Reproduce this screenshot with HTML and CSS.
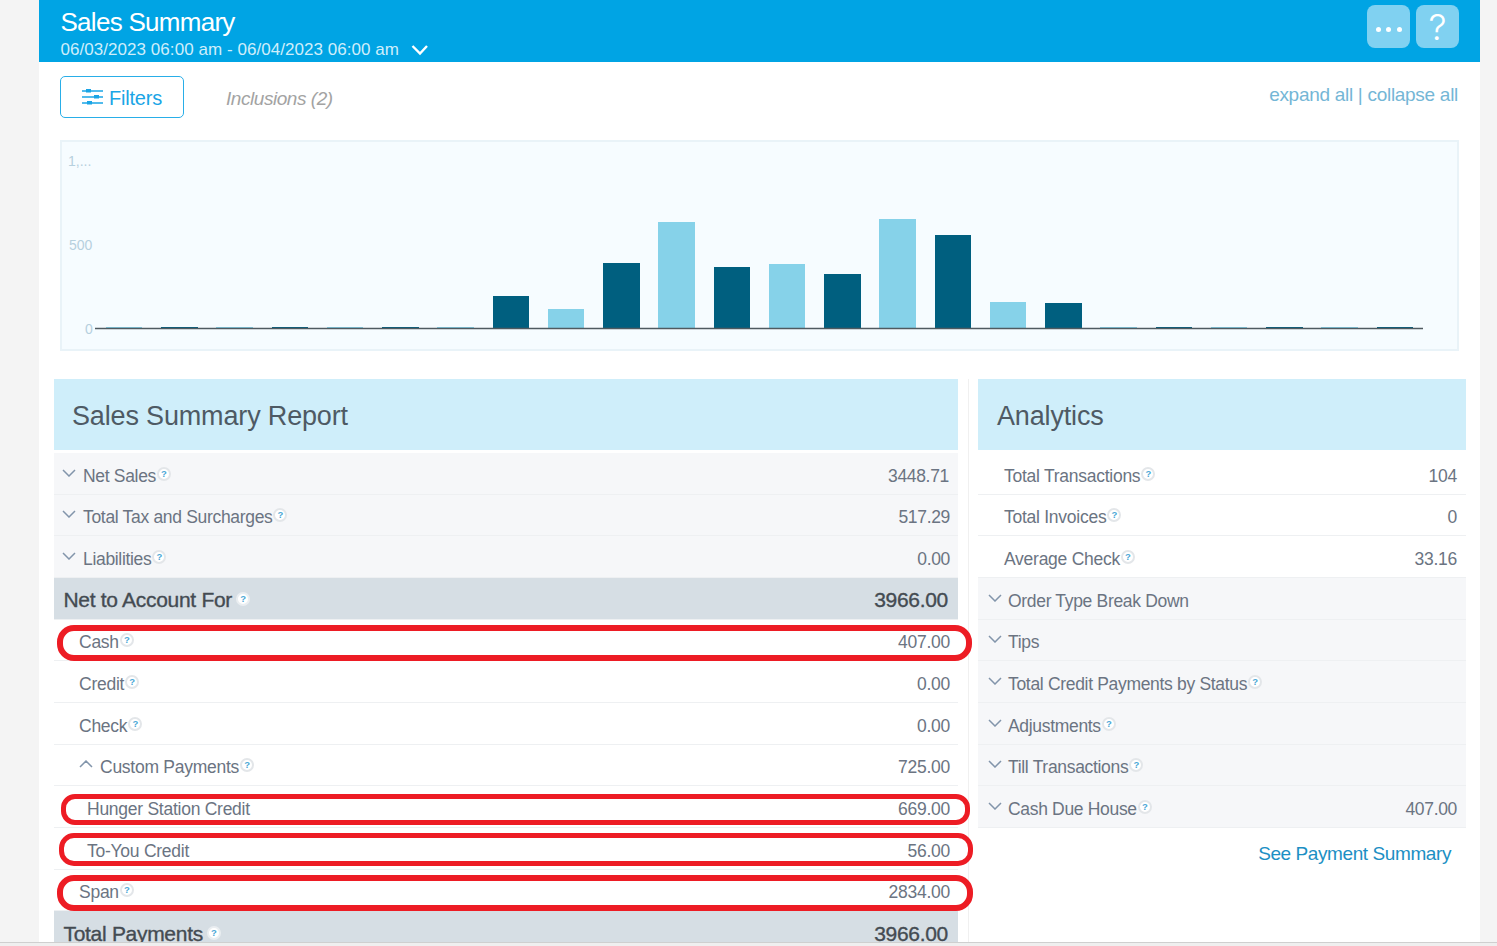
FILE: index.html
```html
<!DOCTYPE html>
<html lang="en">
<head>
<meta charset="utf-8">
<title>Sales Summary</title>
<link rel="stylesheet" href="styles.css">
</head>
<body>
<svg class="defs" width="0" height="0" aria-hidden="true">
  <symbol id="chev" viewBox="0 0 14 8"><path d="M1 1l6 6 6-6" fill="none" stroke="#8295ab" stroke-width="1.5"/></symbol>
  <symbol id="chevup" viewBox="0 0 14 8"><path d="M1 7l6-6 6 6" fill="none" stroke="#8295ab" stroke-width="1.5"/></symbol>
</svg>
<div class="app">
  <header class="top">
    <div class="top-text">
      <div class="title">Sales Summary</div>
      <div class="dates">06/03/2023 06:00 am - 06/04/2023 06:00 am
        <svg class="date-chev" viewBox="0 0 18 12" width="18" height="12"><path d="M1.5 2l7.500 7.500L16 2" fill="none" stroke="#fff" stroke-width="2.400"/></svg>
      </div>
    </div>
    <div class="top-btns">
      <div class="tbtn tbtn-dots"><span class="dot"></span><span class="dot"></span><span class="dot"></span></div>
      <div class="tbtn tbtn-q">?</div>
    </div>
  </header>
  <div class="toolbar">
    <div class="filters">
      <svg viewBox="0 0 21 20" width="21" height="20"><g stroke="#1aa5e6" stroke-width="1.600" fill="#1aa5e6"><path d="M0 4h21M0 10h21M0 16h21"/><rect x="4" y="2" width="5" height="3.500" stroke="none"/><rect x="12" y="8" width="5" height="3.500" stroke="none"/><rect x="5" y="14" width="5" height="3.500" stroke="none"/></g></svg>
      <span class="filters-text">Filters</span>
    </div>
    <div class="inclusions">Inclusions (2)</div>
    <div class="expand">expand all | collapse all</div>
  </div>
  <div class="chart">
    <svg viewBox="1 1 1395 207" width="1395" height="207">
      <g class="axis"><text x="7" y="25">1,...</text><text x="8" y="109">500</text><text x="24" y="193">0</text></g>
      <g class="light">
        <rect x="45" y="186" width="36" height="2"/><rect x="155" y="186" width="37" height="2"/><rect x="266" y="186" width="36" height="2"/><rect x="376" y="186" width="37" height="2"/>
        <rect x="487" y="168" width="36" height="20"/><rect x="597" y="81" width="37" height="107"/><rect x="708" y="123" width="36" height="65"/><rect x="818" y="78" width="37" height="110"/><rect x="929" y="161" width="36" height="27"/>
        <rect x="1039" y="186" width="37" height="2"/><rect x="1150" y="186" width="36" height="2"/><rect x="1260" y="186" width="37" height="2"/>
      </g>
      <g class="dark">
        <rect x="100" y="186" width="37" height="2"/><rect x="211" y="186" width="36" height="2"/><rect x="321" y="186" width="37" height="2"/>
        <rect x="432" y="155" width="36" height="33"/><rect x="542" y="122" width="37" height="66"/><rect x="653" y="126" width="36" height="62"/><rect x="763" y="133" width="37" height="55"/><rect x="874" y="94" width="36" height="94"/><rect x="984" y="162" width="37" height="26"/>
        <rect x="1095" y="186" width="36" height="2"/><rect x="1205" y="186" width="37" height="2"/><rect x="1316" y="186" width="36" height="2"/>
      </g>
      <path class="base" d="M34 187.500H1362"/>
    </svg>
  </div>
  <div class="cols">
    <section class="col-left">
      <h2 class="panel-head">Sales Summary Report</h2>
      <div class="rows">
        <div class="row gray"><svg class="chev"><use href="#chev"/></svg><span class="label">Net Sales<i class="help">?</i></span><span class="val nudge">3448.71</span></div>
        <div class="row gray"><svg class="chev"><use href="#chev"/></svg><span class="label">Total Tax and Surcharges<i class="help">?</i></span><span class="val">517.29</span></div>
        <div class="row gray"><svg class="chev"><use href="#chev"/></svg><span class="label">Liabilities<i class="help">?</i></span><span class="val">0.00</span></div>
        <div class="row total"><span class="label">Net to Account For<i class="help">?</i></span><span class="val">3966.00</span></div>
        <div class="row ind"><span class="label">Cash<i class="help">?</i></span><span class="val">407.00</span></div>
        <div class="row ind"><span class="label">Credit<i class="help">?</i></span><span class="val">0.00</span></div>
        <div class="row ind"><span class="label">Check<i class="help">?</i></span><span class="val">0.00</span></div>
        <div class="row ind-chev"><svg class="chev"><use href="#chevup"/></svg><span class="label">Custom Payments<i class="help">?</i></span><span class="val">725.00</span></div>
        <div class="row sub"><span class="label">Hunger Station Credit</span><span class="val">669.00</span></div>
        <div class="row sub"><span class="label">To-You Credit</span><span class="val">56.00</span></div>
        <div class="row ind"><span class="label">Span<i class="help">?</i></span><span class="val">2834.00</span></div>
        <div class="row total"><span class="label">Total Payments<i class="help">?</i></span><span class="val">3966.00</span></div>
      </div>
    </section>
    <section class="col-right">
      <h2 class="panel-head">Analytics</h2>
      <div class="rows">
        <div class="row plain"><span class="label">Total Transactions<i class="help">?</i></span><span class="val">104</span></div>
        <div class="row plain"><span class="label">Total Invoices<i class="help">?</i></span><span class="val">0</span></div>
        <div class="row plain"><span class="label">Average Check<i class="help">?</i></span><span class="val">33.16</span></div>
        <div class="row gray"><svg class="chev"><use href="#chev"/></svg><span class="label">Order Type Break Down</span></div>
        <div class="row gray"><svg class="chev"><use href="#chev"/></svg><span class="label">Tips</span></div>
        <div class="row gray"><svg class="chev"><use href="#chev"/></svg><span class="label">Total Credit Payments by Status<i class="help">?</i></span></div>
        <div class="row gray"><svg class="chev"><use href="#chev"/></svg><span class="label">Adjustments<i class="help">?</i></span></div>
        <div class="row gray"><svg class="chev"><use href="#chev"/></svg><span class="label">Till Transactions<i class="help">?</i></span></div>
        <div class="row gray"><svg class="chev"><use href="#chev"/></svg><span class="label">Cash Due House<i class="help">?</i></span><span class="val">407.00</span></div>
      </div>
      <div class="see">See Payment Summary</div>
    </section>
  </div>
</div>
<div class="oval oval-cash"></div>
<div class="oval oval-hunger"></div>
<div class="oval oval-toyou"></div>
<div class="oval oval-span"></div>
<div class="bottom-strip"></div>
</body>
</html>
```
FILE: styles.css
```css
* { box-sizing: border-box; }
html, body { margin: 0; height: 946px; overflow: hidden; }
body { background: #f4f4f4; font-family: "Liberation Sans", Arial, sans-serif; color: #6b7482; position: relative; }
.defs { position: absolute; }
.app { margin-left: 39px; width: 1441px; height: 946px; background: #fff; overflow: hidden; }

.top { height: 62px; background: #00a4e4; display: flex; justify-content: space-between; padding: 5px 21px 0 21.500px; color: #fff; }
.title { font-size: 26px; line-height: 30px; letter-spacing: -0.72px; margin-top: 2px; }
.dates { font-size: 17px; line-height: 20px; letter-spacing: 0.05px; margin-top: 3px; color: #cfeefb; display: flex; align-items: center; gap: 12px; }
.date-chev { flex: none; }
.top-btns { display: flex; gap: 6px; }
.tbtn { width: 43px; height: 43px; border-radius: 8px; background: #80d1f1; display: flex; align-items: center; justify-content: center; }
.tbtn-dots { gap: 5.500px; padding-top: 6px; }
.tbtn-q { font-family: Inter, "Liberation Sans", sans-serif; font-size: 36px; font-weight: 300; color: #fff; }
.dot { width: 5px; height: 5px; border-radius: 50%; background: #fff; }

.toolbar { display: flex; padding: 14px 22px 0 21px; height: 78px; align-items: flex-start; }
.filters { width: 124px; height: 42px; border: 1px solid #29aee8; border-radius: 5px; display: flex; align-items: center; justify-content: center; gap: 6px; color: #1aa5e6; font-size: 20px; letter-spacing: -0.18px; }
.filters-text { position: relative; top: 1px; }
.inclusions { margin-left: 42px; margin-top: 12px; font-style: italic; font-size: 19px; letter-spacing: -0.45px; color: #a3a3a3; }
.expand { margin-left: auto; margin-top: 8px; font-size: 19px; letter-spacing: -0.29px; color: #74b6d6; }

.chart { margin-left: 21px; width: 1399px; height: 211px; border: 2px solid #e9f3f8; background: #f6fcff; }
.chart svg { display: block; }
.axis text { font-family: "Liberation Sans", Arial, sans-serif; font-size: 14px; fill: #b6d0de; }
.light rect { fill: #86d2e9; }
.dark rect { fill: #005f7f; }
.base { stroke: #4f5a60; stroke-width: 1.500; fill: none; }

.cols { display: flex; margin-top: 28px; padding-left: 15px; }
.col-left { width: 904px; flex: none; }
.col-right { width: 498px; flex: none; margin-left: 10px; padding-left: 10px; border-left: 1px solid #f0f0f0; }
.col-right .panel-head { margin-left: -1px; padding-left: 19px; }
.panel-head { margin: 0; height: 71px; background: #cfeefa; padding: 0 18px; font-size: 27px; font-weight: 400; line-height: 75px; color: #4e5a64; letter-spacing: -0.16px; }
.rows { margin-top: 3px; }
.row { height: 41.670px; border-bottom: 1px solid #eef0f2; display: flex; align-items: center; padding-right: 8px; font-size: 17.500px; letter-spacing: -0.26px; }
.col-right .row { margin-left: -1px; padding-right: 9px; }
.label { position: relative; top: 3px; white-space: nowrap; }
.val { margin-left: auto; position: relative; top: 3px; }
.nudge { left: -1px; }
.gray { background: #f6f7f9; letter-spacing: -0.32px; }
.chev { width: 14px; height: 8px; flex: none; margin: -1px 7px 0 8px; }
.col-right .chev { margin-left: 10px; margin-right: 6px; }
.total { background: #d6dee4; color: #444b52; padding-left: 9.500px; font-size: 21px; -webkit-text-stroke: 0.35px #444b52; letter-spacing: -0.3px; padding-right: 10px; }
.total .label, .total .val { top: 2px; }
.total .help { border-color: #eaeef1; margin-left: 4px; }
.ind { padding-left: 25px; }
.ind-chev { padding-left: 25px; }
.ind-chev .chev { margin: -2px 7px 0 0; }
.sub { padding-left: 33px; }
.plain { padding-left: 26px; }
.help { display: inline-block; width: 14px; height: 14px; border-radius: 50%; border: 2px solid #e3e6e9; background: #fff; color: #4ba7d6; font-size: 9.500px; font-weight: 700; font-style: normal; line-height: 10px; text-align: center; vertical-align: 5px; margin-left: 1px; letter-spacing: 0; -webkit-text-stroke: 0; }
.see { text-align: right; margin-top: 15px; padding-right: 15px; font-size: 19px; letter-spacing: -0.41px; color: #1c8fc4; }

.oval { position: absolute; border: 6px solid #ed1c24; background: transparent; }
.oval-cash { left: 57px; top: 625px; width: 915px; height: 36px; border-radius: 17px; }
.oval-hunger { left: 61px; top: 794px; width: 909px; height: 31px; border-radius: 14px; border-width: 5px; }
.oval-toyou { left: 59px; top: 833px; width: 914px; height: 33px; border-radius: 15px; border-width: 5px; }
.oval-span { left: 57px; top: 875px; width: 916px; height: 36px; border-radius: 17px; }
.bottom-strip { position: absolute; left: 0; right: 0; top: 942px; height: 4px; background: #efefef; border-top: 1px solid #cfcfcf; }
```
